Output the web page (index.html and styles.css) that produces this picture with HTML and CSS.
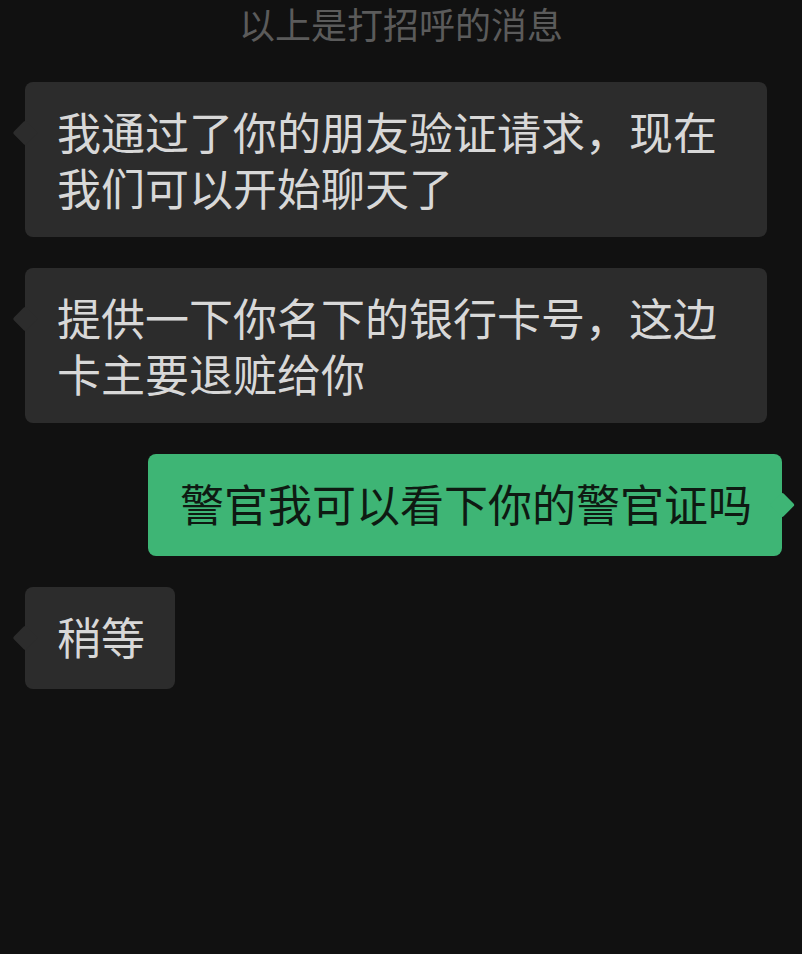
FILE: index.html
```html
<!DOCTYPE html>
<html lang="zh-CN">
<head>
<meta charset="utf-8">
<title>聊天</title>
<link rel="stylesheet" href="styles.css">
</head>
<body>
<div class="chat">
  <div class="notice">以上是打招呼的消息</div>
  <div class="row row-left">
    <div class="bubble bubble-in">我通过了你的朋友验证请求，现在我们可以开始聊天了</div>
  </div>
  <div class="row row-left">
    <div class="bubble bubble-in">提供一下你名下的银行卡号，这边卡主要退赃给你</div>
  </div>
  <div class="row row-right">
    <div class="bubble bubble-out">警官我可以看下你的警官证吗</div>
  </div>
  <div class="row row-left">
    <div class="bubble bubble-in">稍等</div>
  </div>
</div>
</body>
</html>
```
FILE: styles.css
```css
html, body {
  margin: 0;
  padding: 0;
  background: #111111;
}

body {
  width: 802px;
  height: 954px;
  overflow: hidden;
  font-family: "Noto Sans CJK SC", "Noto Sans", sans-serif;
}

.chat {
  display: flex;
  flex-direction: column;
  gap: 31px;
  padding-top: 3px;
}

.notice {
  text-align: center;
  font-size: 36px;
  line-height: 40px;
  color: #5b5b5b;
  margin-bottom: 8px;
}

.row {
  display: flex;
}

.row-left {
  justify-content: flex-start;
  padding-left: 25px;
}

.row-right {
  justify-content: flex-end;
  padding-right: 20px;
}

.bubble {
  position: relative;
  box-sizing: border-box;
  max-width: 742px;
  min-height: 102px;
  padding: 21px 30px 22px 32px;
  border-radius: 8px;
  font-size: 44px;
  line-height: 56px;
}

.bubble::before {
  content: "";
  position: absolute;
  top: 41.5px;
  width: 18.4px;
  height: 18.4px;
  border-radius: 2px;
  transform: rotate(45deg);
}

.bubble-in {
  background: #2c2c2c;
  color: #d8d8d8;
}

.bubble-in::before {
  left: -9.2px;
  background: #2c2c2c;
}

.bubble-out {
  background: #3eb575;
  color: #0e1a12;
}

.bubble-out::before {
  right: -9.2px;
  background: #3eb575;
}
```
